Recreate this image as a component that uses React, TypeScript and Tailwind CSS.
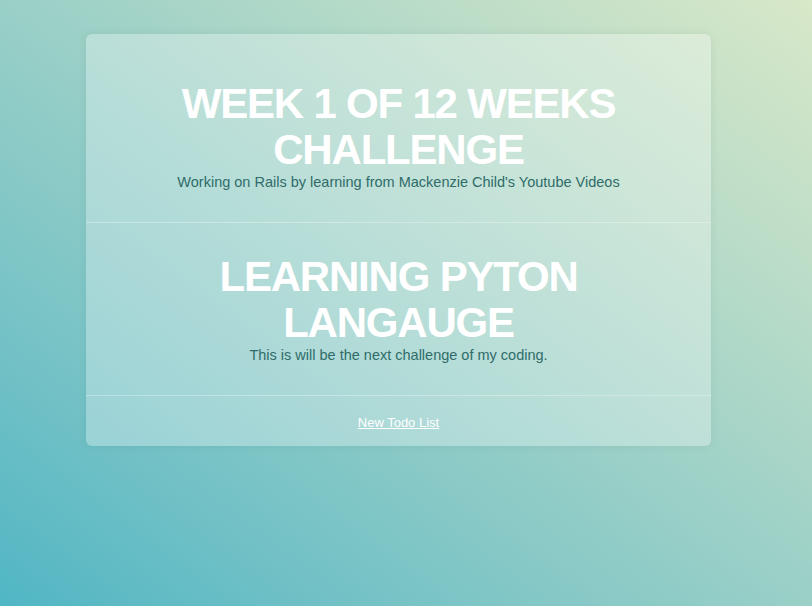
const lists = [
  {
    title: "WEEK 1 OF 12 WEEKS CHALLENGE",
    desc: "Working on Rails by learning from Mackenzie Child's Youtube Videos",
  },
  {
    title: "LEARNING PYTON LANGAUGE",
    desc: "This is will be the next challenge of my coding.",
  },
]

export default function App() {
  return (
    <div className="min-h-screen bg-linear-to-tr from-[#50b6c4] to-[#d8e8c8] font-['Liberation_Sans',Arial,sans-serif]">
      <div className="w-[797px] pt-[34px]">
        <div className="mx-auto w-[625px] rounded-md bg-white/30 pt-4 shadow-[0_0_8px_rgba(0,60,60,0.08)]">
          {lists.map((l) => (
            <div key={l.title} className="border-b border-white/30 px-20 py-[31px] text-center">
              <h2 className="text-[42px] leading-[46px] font-bold tracking-[-1.2px] text-white">{l.title}</h2>
              <p className="text-[14.5px] leading-[18px] text-[#2f6c69]">{l.desc}</p>
            </div>
          ))}
          <div className="pt-[18px] pb-[15px] text-center text-[13px] leading-[17px]">
            <a href="#" className="text-white underline">
              New Todo List
            </a>
          </div>
        </div>
      </div>
    </div>
  )
}
